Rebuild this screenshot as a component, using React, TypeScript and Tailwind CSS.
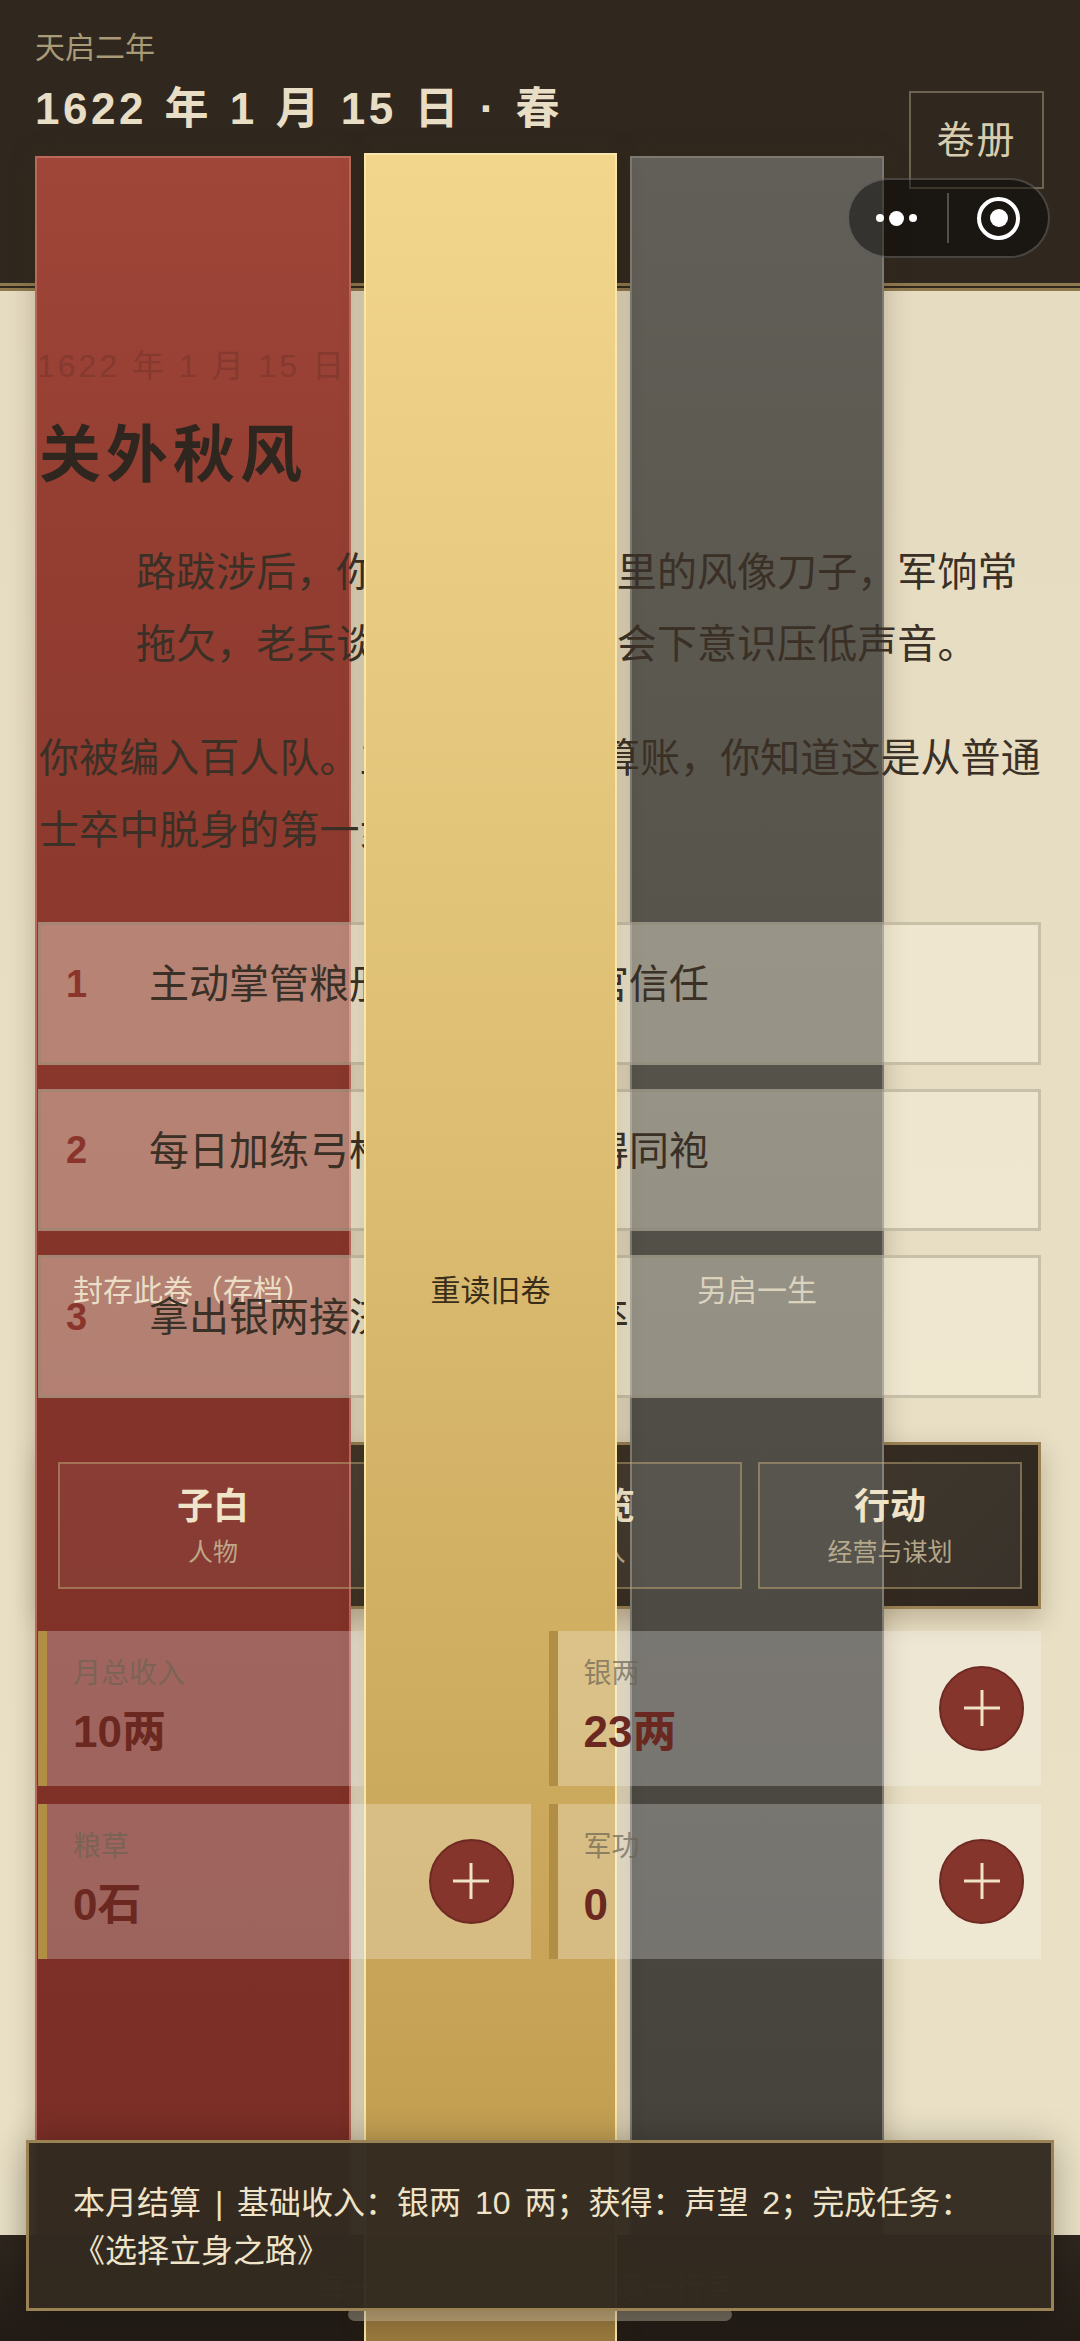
const font = { fontFamily: '"Liberation Sans", "Noto Sans CJK SC", sans-serif' };

const choices = [
  { n: "1", text: "主动掌管粮册，以博取长官信任" },
  { n: "2", text: "每日加练弓枪，以此来赢得同袍" },
  { n: "3", text: "拿出银两接济手下贫苦士卒" },
];

const tabs = [
  { title: "子白", sub: "人物", width: "w-[310px]" },
  { title: "资产总览", sub: "资源与收入", width: "w-[358px]" },
  { title: "行动", sub: "经营与谋划", width: "w-[264px]" },
];

const stats = [
  { label: "月总收入", value: "10两", plus: false, layer: "z-20" },
  { label: "银两", value: "23两", plus: true, layer: "z-40" },
  { label: "粮草", value: "0石", plus: true, layer: "z-40" },
  { label: "军功", value: "0", plus: true, layer: "z-40" },
];

const PlusButton = () => (
  <button className="flex h-[85px] w-[85px] items-center justify-center rounded-full border-2 border-[#6e2a22] bg-[#85352b]">
    <svg width="38" height="38" viewBox="0 0 38 38">
      <path d="M19 1v36M1 19h36" stroke="#efe3c8" strokeWidth="3" fill="none" />
    </svg>
  </button>
);

const Capsule = () => (
  <div className="absolute left-[847px] top-[178px] z-50 flex h-[80px] w-[203px] items-center rounded-full border-2 border-white/20 bg-black/45">
    <div className="flex w-[98px] items-center justify-center gap-[5px] pr-[4px]">
      <span className="h-[8px] w-[8px] rounded-full bg-white" />
      <span className="h-[15px] w-[15px] rounded-full bg-white" />
      <span className="h-[8px] w-[8px] rounded-full bg-white" />
    </div>
    <div className="h-[50px] w-[2px] bg-white/25" />
    <div className="flex flex-1 items-center justify-center">
      <div className="flex h-[43px] w-[43px] items-center justify-center rounded-full border-[4px] border-white">
        <span className="h-[18px] w-[18px] rounded-full bg-white" />
      </div>
    </div>
  </div>
);

export default function App() {
  return (
    <div
      style={font}
      className="relative flex h-[2341px] w-[1080px] flex-col overflow-hidden bg-[linear-gradient(180deg,#e5dbc1,#eae1c6)]"
    >
      {/* header */}
      <header className="flex h-[291px] shrink-0 justify-between border-b-[8px] border-double border-[#8f7a50] bg-[#30281f] pl-[35px] pr-[36px]">
        <div>
          <div className="mt-[28px] text-[30px] leading-[40px] text-[#a99a78]">天启二年</div>
          <div className="mt-[13px] text-[44px] font-bold leading-[56px] tracking-[3.5px] text-[#e8dec6] [word-spacing:2px]">
            1622 年 1 月 15 日 · 春
          </div>
        </div>
        <button className="mt-[91px] h-[98px] w-[135px] border-2 border-[#6e6350] text-[38px] tracking-[2px] text-[#d8cdb0]">
          卷册
        </button>
      </header>

      {/* the three stretched buttons that lie over the page */}
      <button className="absolute left-[35px] top-[156px] z-10 flex h-[2268px] w-[316px] items-center justify-center border-2 border-[#b9685a] bg-[linear-gradient(180deg,#a04639,#963f33_300px,#85342a_1100px,#7a2e26_2079px,#56221b_2079px)] text-[30px] text-[#efe3c8]/90 shadow-[0_0_24px_rgba(60,40,10,0.25)]">
        封存此卷（存档）
      </button>
      <button className="absolute left-[364px] top-[153px] z-30 flex h-[2274px] w-[253px] items-center justify-center border-2 border-[#f8e6ac] bg-[linear-gradient(180deg,#f2d68c,#dcbd72_1000px,#c4a053_1950px,#c0a050_2082px,#9b7b3e_2082px)] text-[30px] text-[#3a2d1a] shadow-[0_0_24px_rgba(60,40,10,0.2)]">
        重读旧卷
      </button>
      <button className="absolute left-[630px] top-[156px] z-10 flex h-[2268px] w-[254px] items-center justify-center border-2 border-[#7c7a72] bg-[linear-gradient(180deg,#625f58,#5b5850_500px,#4e4b44_1400px,#45423c_2079px,#3a3937_2079px)] text-[30px] text-[#e6dcc2]/80 shadow-[0_0_24px_rgba(60,40,10,0.25)]">
        另启一生
      </button>

      <Capsule />

      {/* story and panels */}
      <main className="flex-1 px-[39px] pt-[55px]">
        <div className="relative z-20 -ml-[2px] text-[32px] leading-[40px] tracking-[3px] text-[#85392f]">
          1622 年 1 月 15 日
        </div>
        <h1 className="relative z-20 mt-[28px] text-[62px] font-bold leading-[84px] tracking-[5px] text-[#2f271f]">
          关外秋风
        </h1>
        <p className="relative z-20 mt-[38px] pl-[97px] text-[40px] leading-[72px] tracking-[0.07px] text-[#3a3026]">
          路跋涉后，你抵达辽东。这里的风像刀子，军饷常拖欠，老兵谈起建州人时总会下意识压低声音。
        </p>
        <p className="relative z-20 mt-[42px] text-[40px] leading-[72px] tracking-[0.07px] text-[#3a3026]">
          你被编入百人队。主官让你帮着算账，你知道这是从普通士卒中脱身的第一步。
        </p>

        <div className="mt-[56px] -ml-px flex w-[1003px] flex-col gap-6">
          {choices.map((c) => (
            <div
              key={c.n}
              className="relative z-20 flex h-[142.5px] items-center border-[3px] border-[#8f8870]/40 bg-[#fbf5e2]/40 pb-[18px] pl-[25px]"
            >
              <span className="w-[83px] text-[38px] font-bold text-[#8a352b]">{c.n}</span>
              <span className="text-[40px] text-[#3a3026]">{c.text}</span>
            </div>
          ))}
        </div>

        <nav className="mt-[44px] flex h-[167px] gap-4 border-[3px] border-[#9a8255] bg-[linear-gradient(135deg,#453b2e,#2f271f)] py-[17px] pl-[16px] shadow-[0_10px_24px_rgba(60,40,10,0.25)]">
          {tabs.map((t) => (
            <div
              key={t.title}
              className={`relative z-20 flex ${t.width} flex-col items-center border-2 border-[#bea573]/50 bg-white/5 pt-[19px]`}
            >
              <div className="text-[36px] font-bold leading-[48px] text-[#efe3c8]">{t.title}</div>
              <div className="text-[25px] leading-[42px] text-[#c9bb98]/85">{t.sub}</div>
            </div>
          ))}
        </nav>

        <div className="mt-[22px] -ml-px grid w-[1003px] grid-cols-2 gap-[18px]">
          {stats.map((s) => (
            <div
              key={s.label}
              className={`relative ${s.layer} flex h-[155px] items-center justify-between border-l-[9px] border-[#b08f45] bg-white/25 pl-[26px] pr-[17px]`}
            >
              <div className="pb-[2px]">
                <div className="text-[28px] leading-[40px] text-[#6b6352]/70">{s.label}</div>
                <div className="mt-[10px] text-[44px] font-bold leading-[56px] text-[#6a2820]">{s.value}</div>
              </div>
              {s.plus && <PlusButton />}
            </div>
          ))}
        </div>
      </main>

      {/* bottom bar */}
      <footer className="relative z-20 flex h-[106px] shrink-0 justify-center bg-[linear-gradient(180deg,#2f271f,#231c16)] pt-[30px]">
        <span className="text-[30px] text-[#efe3c8]/30">每一次抉择，都为史册添一行字。</span>
      </footer>

      <div className="absolute left-[348px] top-[2308px] z-40 h-[13px] w-[384px] rounded-full bg-[#e6dcc2]/40" />

      {/* toast */}
      <div className="absolute left-[26px] top-[2140px] z-50 h-[171px] w-[1028px] border-[3px] border-[#9a8255] bg-[#332a20]/[.97] pl-[44px] pt-[36px] text-[32px] leading-[48px] text-[#efe3c8] shadow-[0_4px_36px_rgba(0,0,0,0.3)] [word-spacing:5px]">
        本月结算 | 基础收入：银两 10 两；获得：声望 2；完成任务：
        <br />
        《选择立身之路》
      </div>
    </div>
  );
}
